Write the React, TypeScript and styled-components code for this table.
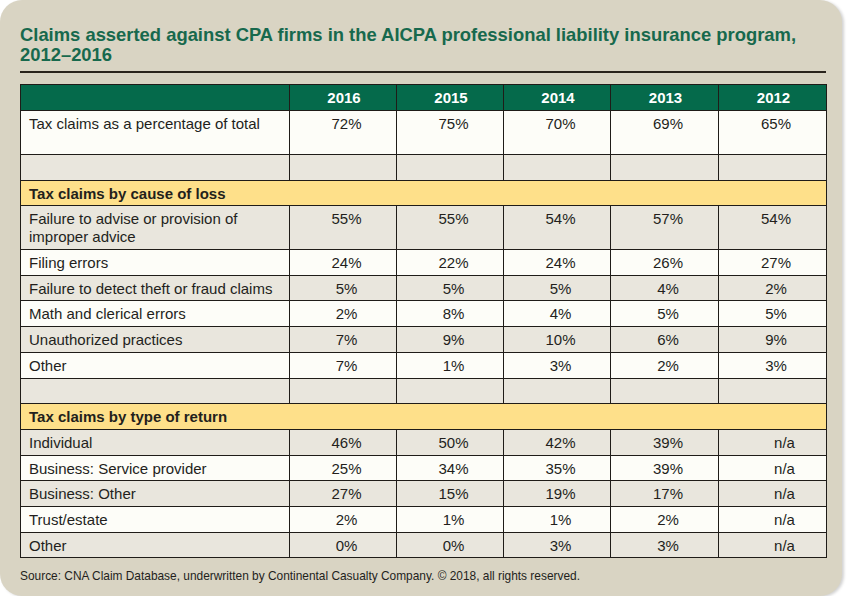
import React from 'react';
import styled, { createGlobalStyle } from 'styled-components';

const GlobalStyle = createGlobalStyle`
  html, body {
    margin: 0;
    padding: 0;
    background: #ffffff;
  }
  body {
    font-family: "Liberation Sans", Arial, sans-serif;
  }
`;

const Card = styled.div`
  box-sizing: border-box;
  width: 842px;
  height: 596px;
  background: #d9d4c3;
  border-radius: 22px;
  box-shadow: 2px 1px 3px rgba(0, 0, 0, 0.18);
  padding: 25px 16px 0 20px;
`;

const Title = styled.h1`
  margin: 0;
  width: 820px;
  font-family: "Liberation Sans", Arial, sans-serif;
  font-weight: bold;
  font-size: 18.4px;
  line-height: 20px;
  color: #17694d;
`;

const Rule = styled.div`
  width: 806px;
  height: 2px;
  margin-top: 6px;
  background: #2a241c;
`;

const Table = styled.table`
  margin-top: 11px;
  width: 807px;
  border-collapse: collapse;
  table-layout: fixed;
  font-size: 15px;
  line-height: 18px;
  color: #231f1c;
`;

const HeadCell = styled.th`
  background: #056a4b;
  color: #ffffff;
  font-weight: bold;
  text-align: center;
  height: 18px;
  padding: 4px 0 3px 2px;
  border: 1px solid #1f1c18;
`;

type Tone = 'white' | 'gray';

const Row = styled.tr<{ $tone: Tone; $tall?: boolean }>`
  background: ${({ $tone }) => ($tone === 'white' ? '#fdfdf8' : '#e9e6dd')};
  height: ${({ $tall }) => ($tall ? '44px' : 'auto')};
`;

const LabelCell = styled.td`
  vertical-align: top;
  padding: 4px 8px 2.7px 8px;
  border: 1px solid #1f1c18;
`;

const ValueCell = styled.td<{ $na?: boolean }>`
  vertical-align: top;
  text-align: center;
  padding: 4px 0 2.7px ${({ $na }) => ($na ? '24px' : '7px')};
  border: 1px solid #1f1c18;
`;

const SectionCell = styled.td`
  background: #fee08a;
  font-weight: bold;
  padding: 4px 8px 2.7px 8px;
  border: 1px solid #1f1c18;
`;

const Source = styled.p`
  margin: 10px 0 0 0;
  font-family: "Liberation Sans", Arial, sans-serif;
  font-size: 13px;
  line-height: 16px;
  color: #231f1c;
  white-space: nowrap;
  transform: scaleX(0.915);
  transform-origin: left center;
`;

type DataRow = { label: string; values: string[]; tall?: boolean };

const years = ['2016', '2015', '2014', '2013', '2012'];

const causeRows: DataRow[] = [
  { label: 'Failure to advise or provision of improper advice', values: ['55%', '55%', '54%', '57%', '54%'] },
  { label: 'Filing errors', values: ['24%', '22%', '24%', '26%', '27%'] },
  { label: 'Failure to detect theft or fraud claims', values: ['5%', '5%', '5%', '4%', '2%'] },
  { label: 'Math and clerical errors', values: ['2%', '8%', '4%', '5%', '5%'] },
  { label: 'Unauthorized practices', values: ['7%', '9%', '10%', '6%', '9%'] },
  { label: 'Other', values: ['7%', '1%', '3%', '2%', '3%'] },
];

const returnRows: DataRow[] = [
  { label: 'Individual', values: ['46%', '50%', '42%', '39%', 'n/a'] },
  { label: 'Business: Service provider', values: ['25%', '34%', '35%', '39%', 'n/a'] },
  { label: 'Business: Other', values: ['27%', '15%', '19%', '17%', 'n/a'] },
  { label: 'Trust/estate', values: ['2%', '1%', '1%', '2%', 'n/a'] },
  { label: 'Other', values: ['0%', '0%', '3%', '3%', 'n/a'] },
];

const DataLine = ({ row, tone }: { row: DataRow; tone: Tone }) => (
  <Row $tone={tone} $tall={row.tall}>
    <LabelCell>{row.label}</LabelCell>
    {row.values.map((v, i) => (
      <ValueCell key={i} $na={v === 'n/a'}>
        {v}
      </ValueCell>
    ))}
  </Row>
);

const EmptyLine = ({ tone }: { tone: Tone }) => (
  <Row $tone={tone}>
    <LabelCell>&nbsp;</LabelCell>
    {years.map((y) => (
      <ValueCell key={y} />
    ))}
  </Row>
);

const App: React.FC = () => (
  <>
    <GlobalStyle />
    <Card>
      <Title>
        Claims asserted against CPA firms in the AICPA professional liability insurance program,
        <br />
        2012–2016
      </Title>
      <Rule />
      <Table>
        <colgroup>
          <col style={{ width: 269 }} />
          <col style={{ width: 107 }} />
          <col style={{ width: 107 }} />
          <col style={{ width: 107 }} />
          <col style={{ width: 108 }} />
          <col style={{ width: 108 }} />
        </colgroup>
        <thead>
          <tr>
            <HeadCell />
            {years.map((y) => (
              <HeadCell key={y}>{y}</HeadCell>
            ))}
          </tr>
        </thead>
        <tbody>
          <DataLine
            tone="white"
            row={{ label: 'Tax claims as a percentage of total', values: ['72%', '75%', '70%', '69%', '65%'], tall: true }}
          />
          <EmptyLine tone="gray" />
          <tr>
            <SectionCell colSpan={6}>Tax claims by cause of loss</SectionCell>
          </tr>
          {causeRows.map((r, i) => (
            <DataLine key={r.label + i} row={r} tone={i % 2 === 0 ? 'gray' : 'white'} />
          ))}
          <EmptyLine tone="gray" />
          <tr>
            <SectionCell colSpan={6}>Tax claims by type of return</SectionCell>
          </tr>
          {returnRows.map((r, i) => (
            <DataLine key={r.label + i} row={r} tone={i % 2 === 0 ? 'gray' : 'white'} />
          ))}
        </tbody>
      </Table>
      <Source>
        Source: CNA Claim Database, underwritten by Continental Casualty Company. © 2018, all rights reserved.
      </Source>
    </Card>
  </>
);

export default App;
